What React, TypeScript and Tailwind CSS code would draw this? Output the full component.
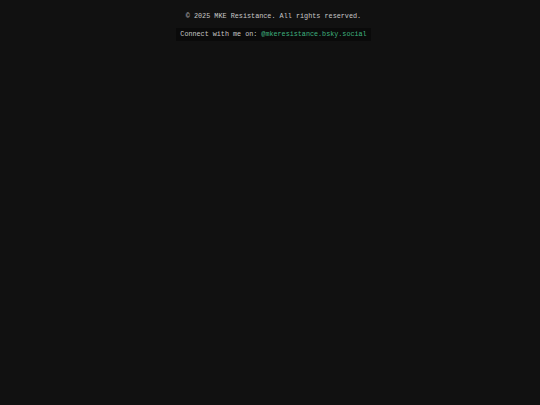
export default function App() {
  return (
    <div className="min-h-screen bg-[#111111] flex flex-col items-center pt-[12px] pl-[7px] font-[Liberation_Mono,Courier_New,monospace]">
      <p className="text-[6.8px] leading-[9px] text-[#c8c8c8]">© 2025 MKE Resistance. All rights reserved.</p>
      <div className="mt-[7px] bg-[#0a0a0a] px-[4px] h-[13px] flex items-center">
        <span className="text-[6.75px] text-[#c8c8c8] whitespace-pre">Connect with me on: </span>
        <span className="text-[6.75px] text-[#3fb27f]">@mkeresistance.bsky.social</span>
      </div>
    </div>
  );
}
